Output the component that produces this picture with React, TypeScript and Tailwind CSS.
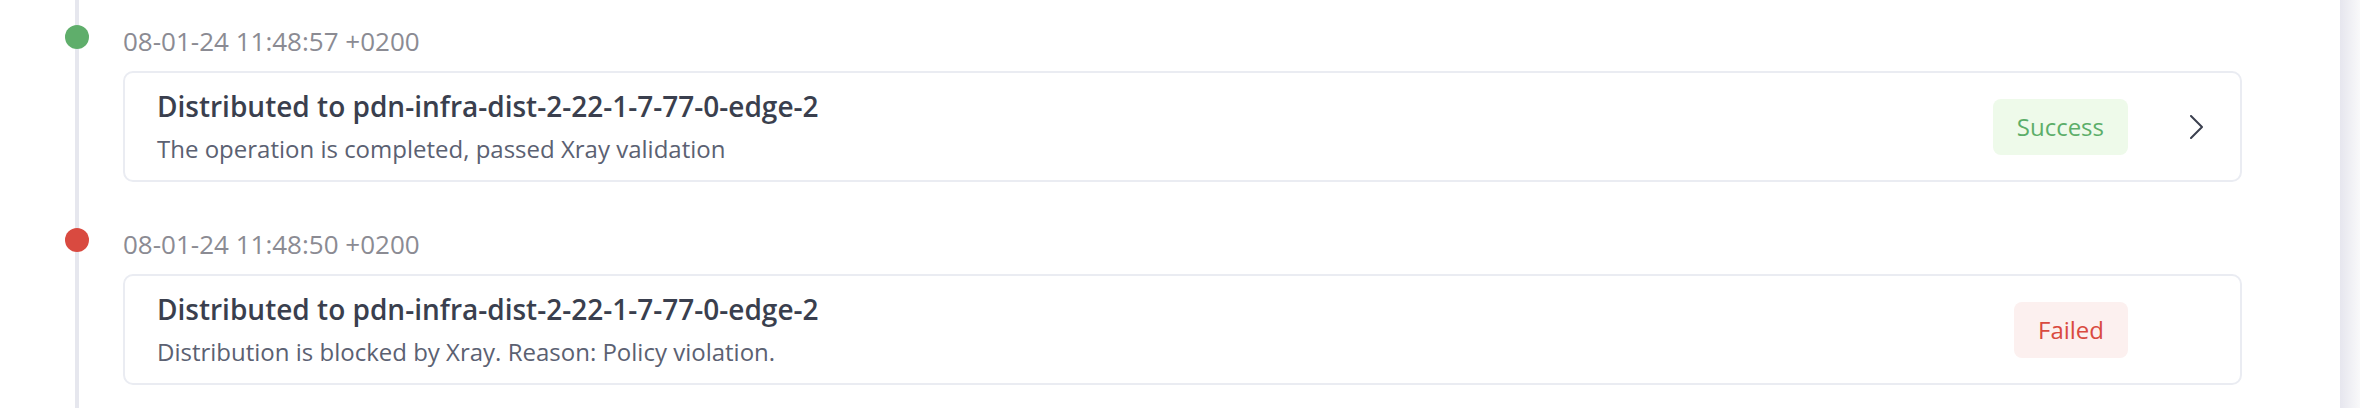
import React from "react";

type Evento = {
  czas: string;
  tytul: string;
  opis: string;
  status: "Success" | "Failed";
  szczegoly: boolean;
};

const zdarzenia: Evento[] = [
  {
    czas: "08-01-24 11:48:57 +0200",
    tytul: "Distributed to pdn-infra-dist-2-22-1-7-77-0-edge-2",
    opis: "The operation is completed, passed Xray validation",
    status: "Success",
    szczegoly: true,
  },
  {
    czas: "08-01-24 11:48:50 +0200",
    tytul: "Distributed to pdn-infra-dist-2-22-1-7-77-0-edge-2",
    opis: "Distribution is blocked by Xray. Reason: Policy violation.",
    status: "Failed",
    szczegoly: false,
  },
];

const Strzalka = () => (
  <svg width="13" height="24" viewBox="0 0 13 24" fill="none">
    <polyline
      points="1,1 12,12 1,23"
      stroke="#3b404f"
      strokeWidth="2"
      strokeLinecap="round"
      strokeLinejoin="round"
    />
  </svg>
);

const Wpis = ({ czas, tytul, opis, status, szczegoly }: Evento) => {
  const ok = status === "Success";
  return (
    <div className="flex">
      <div
        className={`ml-[-14px] w-6 h-6 rounded-full shrink-0 ${
          ok ? "bg-[#5fae6b]" : "bg-[#d94a40]"
        }`}
      ></div>
      <div className="ml-[34px] flex-1 pr-[98px]">
        <div className="text-[26px] leading-[32px] text-[#8b8b93]">{czas}</div>
        <div className="mt-[14px] h-[111px] border-2 border-[#eaecf2] rounded-[10px] pl-[32px] pr-[32px] flex items-center">
          <div className="flex-1">
            <h3 className="text-[28px] leading-[36px] font-semibold text-[#3a3f4e]">{tytul}</h3>
            <p className="mt-[9px] text-[24px] leading-[32px] text-[#5b6172]">{opis}</p>
          </div>
          <div
            className={`h-[56px] px-6 rounded-lg flex items-center text-[24px] ${
              ok ? "bg-[#eefaea] text-[#5cae69]" : "bg-[#fcf0ef] text-[#d94a40]"
            }`}
          >
            {status}
          </div>
          <div className="ml-[56px] w-6 flex justify-center">
            {szczegoly && <Strzalka />}
          </div>
        </div>
      </div>
    </div>
  );
};

export default function App() {
  return (
    <div className="flex h-[408px] bg-white overflow-hidden font-['Open_Sans',sans-serif]">
      <div className="flex-1 pl-[75px]">
        <div className="h-full border-l-4 border-[#e6e7ee] pt-[25px] flex flex-col gap-[46px]">
          {zdarzenia.map((z, i) => (
            <Wpis key={i} {...z} />
          ))}
        </div>
      </div>
      <div className="w-[20px] bg-gradient-to-r from-[#e6e6ee] to-[#f9f9fa]"></div>
      <div className="w-[8px]"></div>
    </div>
  );
}
